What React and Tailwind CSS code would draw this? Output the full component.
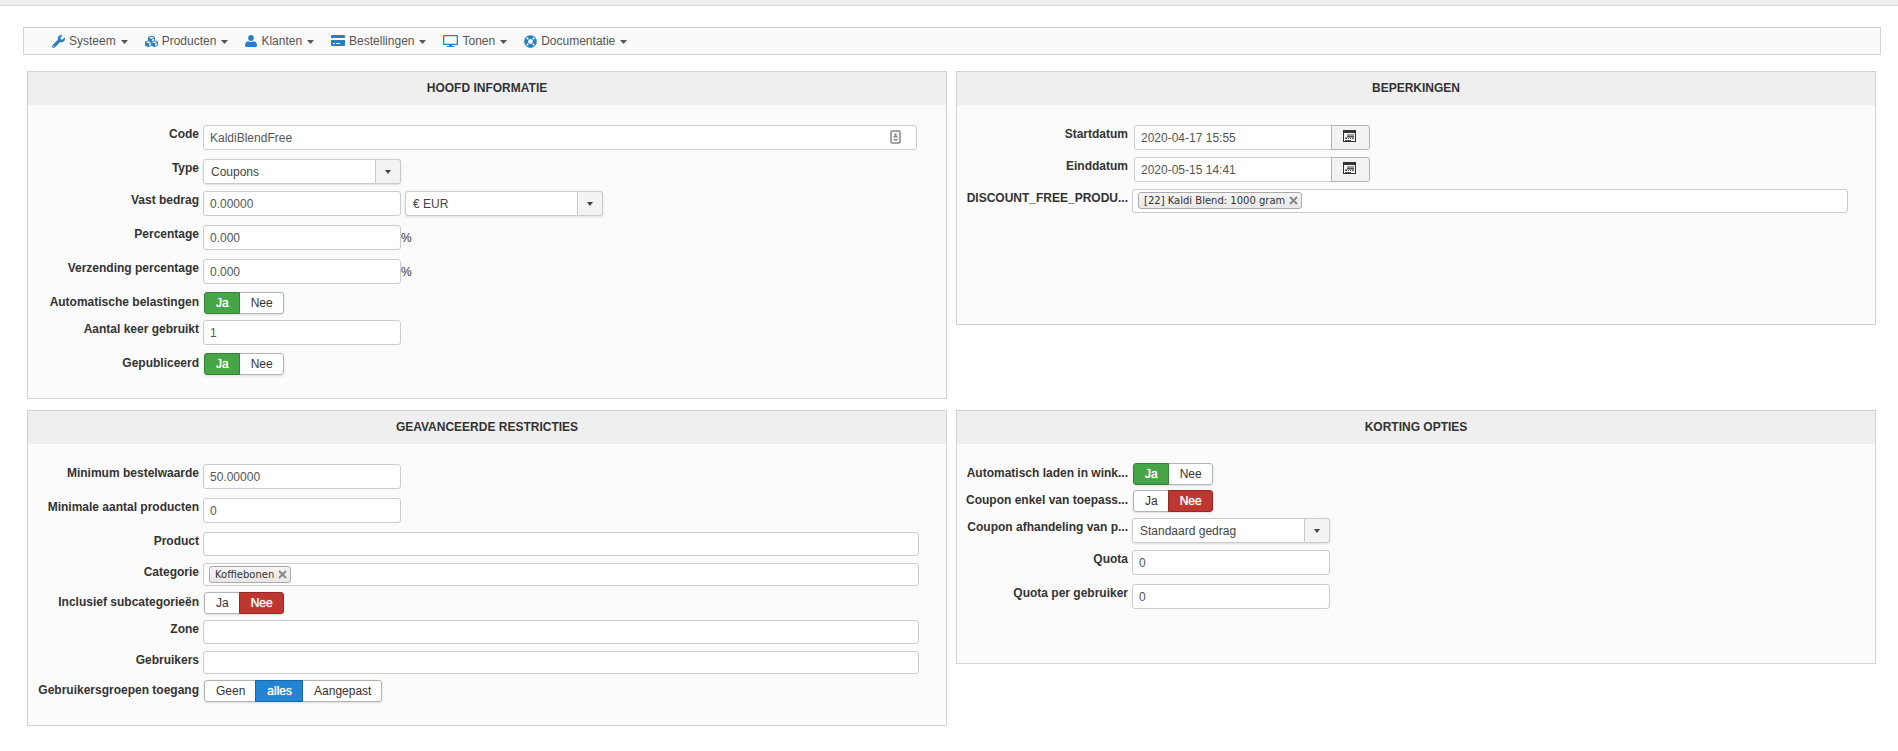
import React, { useState } from 'react';
import { FaWrench, FaCubes, FaLifeRing } from 'react-icons/fa';

const LABEL = 'w-[162px] mr-1 shrink-0 whitespace-nowrap text-right font-bold leading-5';
const INPUT = 'mt-px h-[25px] rounded-[3px] border border-[#ccc] bg-white px-1.5 text-[#555] outline-none';

function Caret({ className = 'h-1 w-[7px]' }) {
  return (
    <svg viewBox="0 0 8 4" className={className} preserveAspectRatio="none" fill="currentColor" aria-hidden="true">
      <path d="M0 0h8L4 4z" />
    </svg>
  );
}

function UserIcon() {
  return (
    <svg viewBox="0 0 12 12" className="h-3 w-3" fill="currentColor" aria-hidden="true">
      <ellipse cx="6" cy="3" rx="2.800" ry="3" />
      <path d="M3 6.300Q4.300 7 6 7T9 6.300Q12 7 12 10.500 12 12 10.500 12h-9Q0 12 0 10.500 0 7 3 6.300z" />
    </svg>
  );
}

function CardIcon() {
  return (
    <svg viewBox="0 0 14 12" className="h-3 w-3.5" fill="currentColor" aria-hidden="true">
      <path d="M1 0h12q1 0 1 1v2H0V1q0-1 1-1z" />
      <path fillRule="evenodd" d="M0 5h14v5q0 1-1 1H1q-1 0-1-1zm2 3v1h2V8zm3 0v1h4V8z" />
    </svg>
  );
}

function ScreenIcon() {
  return (
    <svg viewBox="0 0 15 12" className="h-3 w-[15px]" fill="currentColor" aria-hidden="true">
      <path fillRule="evenodd" d="M1 0h13q1 0 1 1v8q0 1-1 1H1q-1 0-1-1V1q0-1 1-1zm.300 1.300v7.400h12.400V1.300z" />
      <path d="M6 10h3v1h2v1H4v-1h2z" />
    </svg>
  );
}

function CalendarIcon() {
  return (
    <svg viewBox="0 0 13 12" className="h-3 w-[13px]" aria-hidden="true" fill="#333">
      <path fillRule="evenodd" d="M0 0h13v12H0zm1 3v8h11V3z" />
      <path fill="#999" d="M4 4h7v3H4zM2 7h9v1H2z" />
      <path fill="#555" d="M4 6h7v1H4zM2 8h2v1H2zM5 8h1v1H5zM7 8h1v1H7zM9 8h2v1H9zM2 10h6v1H2z" />
    </svg>
  );
}

// Small contact card at the end of the code field
function ContactIcon({ className }) {
  return (
    <svg viewBox="0 0 11 14" className={`h-3.5 w-[11px] ${className}`} aria-hidden="true">
      <rect x="1" y="1" width="9" height="12" rx="1" fill="#f6f6f6" stroke="#888" strokeWidth="1.500" />
      <path d="M4.500 3.500h2v3h-2zM3.500 6h4v1.500h-4zM3.500 9h4v1.500h-4z" fill="#888" />
    </svg>
  );
}

const MENU = [
  { label: 'Systeem', icon: <FaWrench size={13} /> },
  { label: 'Producten', icon: <FaCubes size={13} /> },
  { label: 'Klanten', icon: <UserIcon /> },
  { label: 'Bestellingen', icon: <CardIcon /> },
  { label: 'Tonen', icon: <ScreenIcon /> },
  { label: 'Documentatie', icon: <FaLifeRing size={13} /> },
];

function Panel({ title, children }) {
  return (
    <section className="min-h-[254px] border border-[#d3d3d3] bg-[#fbfbfb] pb-[18px]">
      <h2 className="mb-[19px] h-[33px] bg-[#efefef] text-center leading-[33px] font-bold uppercase">{title}</h2>
      <div className="pr-[27px] pl-[9px]">{children}</div>
    </section>
  );
}

function Row({ label, id, height = 'h-[34px]', children }) {
  return (
    <div className={`flex items-start ${height}`}>
      <label htmlFor={id} className={LABEL}>{label}</label>
      {children}
    </div>
  );
}

function TextRow({ label, id, value, suffix, children }) {
  return (
    <Row label={label} id={id}>
      <input id={id} type="text" defaultValue={value} className={`${INPUT} w-[198px]`} />
      {suffix && <span className="leading-7">{suffix}</span>}
      {children}
    </Row>
  );
}

function Select({ id, options, label }) {
  return (
    <div className="relative mt-px h-[25px] w-[198px]">
      <select
        id={id}
        aria-label={label}
        className="h-full w-full appearance-none rounded-[3px] border border-[#ccc] bg-white pl-[7px] text-[#444] shadow-sm outline-none"
      >
        {options.map((o) => (
          <option key={o}>{o}</option>
        ))}
      </select>
      <span className="pointer-events-none absolute inset-y-0 right-0 flex w-[26px] items-center justify-center rounded-r-[3px] border border-[#ccc] bg-[#f3f3f3] text-[#444]">
        <Caret className="h-1 w-1.5" />
      </span>
    </div>
  );
}

const ACTIVE = {
  green: 'z-10 border-[#378137] bg-[#46a546] text-white [text-shadow:0_0_1px_#fff]',
  red: 'z-10 border-[#942a25] bg-[#bd362f] text-white [text-shadow:0_0_1px_#fff]',
  blue: 'z-10 border-[#1a67a5] bg-[#2384d3] text-white [text-shadow:0_0_1px_#fff]',
};

function ToggleRow({ label, name, options, initial }) {
  const [value, setValue] = useState(initial);
  return (
    <div role="radiogroup" aria-label={label} className="flex h-[27px] items-start">
      <span className={LABEL}>{label}</span>
      <div className="ml-px flex rounded-[3px] shadow-sm">
        {options.map(([text, color]) => (
          <label
            key={text}
            className={`relative -ml-px h-[22px] cursor-pointer border pr-2.5 pl-[11px] leading-5 first:ml-0 first:rounded-l-[3px] last:rounded-r-[3px] ${
              value === text ? ACTIVE[color] : 'border-[#b3b3b3] bg-white'
            }`}
          >
            <input
              type="radio"
              name={name}
              className="sr-only"
              checked={value === text}
              onChange={() => setValue(text)}
            />
            {text}
          </label>
        ))}
      </div>
    </div>
  );
}

const YES_NO = [['Ja', 'green'], ['Nee', 'red']];
const GROUPS = [['Geen', 'red'], ['alles', 'blue'], ['Aangepast', 'green']];

// Multi-select box with removable tags
function TagRow({ label, id, height, boxHeight = 'h-6', initial = [] }) {
  const [tags, setTags] = useState(initial);
  return (
    <Row label={label} id={id} height={height}>
      <div className={`mt-px flex flex-1 items-start rounded-[3px] border border-[#ccc] bg-white px-[5px] pt-0.5 ${boxHeight}`}>
        {tags.map((tag) => (
          <span
            key={tag}
            className="flex h-[17px] shrink-0 items-center gap-1 rounded-[3px] border border-[#aaa] bg-linear-to-b from-[#f4f4f4] to-[#e8e8e8] pr-[3px] pl-[5px] font-['DejaVu_Sans'] text-[10px] leading-[15px] text-[#333]"
          >
            {tag}
            <button
              type="button"
              aria-label={`Verwijder ${tag}`}
              onClick={() => setTags(tags.filter((t) => t !== tag))}
            >
              <svg viewBox="0 0 9 9" className="h-[9px] w-[9px]" stroke="#888" strokeWidth="2" aria-hidden="true">
                <path d="M1 1l7 7M8 1L1 8" />
              </svg>
            </button>
          </span>
        ))}
        <input id={id} type="text" className="h-full min-w-0 flex-1 bg-transparent outline-none" />
      </div>
    </Row>
  );
}

function DateRow({ label, id, value }) {
  return (
    <Row label={label} id={id} height="h-8">
      <input id={id} type="text" defaultValue={value} className={`${INPUT} ml-0.5 w-[198px] rounded-r-none`} />
      <button
        type="button"
        aria-label={`${label} kiezen`}
        className="mt-px -ml-px flex h-[25px] w-[39px] justify-center rounded-r-[3px] border border-[#b3b3b3] bg-[#f3f3f3] pt-1 pr-0.5"
      >
        <CalendarIcon />
      </button>
    </Row>
  );
}

function App() {
  return (
    <div className="bg-white font-['Liberation_Sans',Arial,sans-serif] text-xs text-[#333]">
      <div className="h-1.5 border-b border-[#ddd] bg-[#efefef]" />
      <nav className="mt-[21px] mr-[17px] ml-[23px] flex h-7 items-center gap-[17px] border border-[#d3d3d3] bg-[#fafafa] pl-7 text-[#555]">
        {MENU.map((item) => (
          <a key={item.label} href="#" className="flex items-center gap-1">
            <span className="text-[#2a7fc0]">{item.icon}</span>
            {item.label}
            <Caret className="mt-0.5 ml-px h-1 w-[7px]" />
          </a>
        ))}
      </nav>

      <main className="mt-4 mr-[22px] ml-[27px] grid grid-cols-2 items-start gap-x-[9px] gap-y-[11px]">
        <Panel title="Hoofd informatie">
          <Row label="Code" id="code">
            <div className="relative mr-0.5 flex flex-1">
              <input id="code" type="text" defaultValue="KaldiBlendFree" className={`${INPUT} w-full`} />
              <ContactIcon className="absolute top-1.5 right-4" />
            </div>
          </Row>
          <Row label="Type" id="type" height="h-8">
            <Select id="type" options={['Coupons', 'Kortingen']} />
          </Row>
          <TextRow label="Vast bedrag" id="flat" value="0.00000">
            <div className="ml-1">
              <Select id="currency" label="Valuta" options={['€ EUR']} />
            </div>
          </TextRow>
          <TextRow label="Percentage" id="percent" value="0.000" suffix="%" />
          <TextRow label="Verzending percentage" id="shipping" value="0.000" suffix="%" />
          <ToggleRow label="Automatische belastingen" name="tax" options={YES_NO} initial="Ja" />
          <TextRow label="Aantal keer gebruikt" id="used" value="1" />
          <ToggleRow label="Gepubliceerd" name="published" options={YES_NO} initial="Ja" />
        </Panel>

        <Panel title="Beperkingen">
          <DateRow label="Startdatum" id="start" value="2020-04-17 15:55" />
          <DateRow label="Einddatum" id="end" value="2020-05-15 14:41" />
          <TagRow
            label="DISCOUNT_FREE_PRODU..."
            id="free"
            height="h-[31px]"
            initial={['[22] Kaldi Blend: 1000 gram']}
          />
        </Panel>

        <Panel title="Geavanceerde restricties">
          <TextRow label="Minimum bestelwaarde" id="minorder" value="50.00000" />
          <TextRow label="Minimale aantal producten" id="minqty" value="0" />
          <TagRow label="Product" id="product" height="h-[31px]" />
          <TagRow label="Categorie" id="category" height="h-[30px]" boxHeight="h-[23px]" initial={['Koffiebonen']} />
          <ToggleRow label="Inclusief subcategorieën" name="subcats" options={YES_NO} initial="Nee" />
          <TagRow label="Zone" id="zone" height="h-[31px]" />
          <TagRow label="Gebruikers" id="users" height="h-[30px]" boxHeight="h-[23px]" />
          <ToggleRow label="Gebruikersgroepen toegang" name="groups" options={GROUPS} initial="alles" />
        </Panel>

        <Panel title="Korting opties">
          <ToggleRow label="Automatisch laden in wink..." name="autoload" options={YES_NO} initial="Ja" />
          <ToggleRow label="Coupon enkel van toepass..." name="only" options={YES_NO} initial="Nee" />
          <Row label="Coupon afhandeling van p..." id="handling" height="h-8">
            <Select id="handling" options={['Standaard gedrag']} />
          </Row>
          <TextRow label="Quota" id="quota" value="0" />
          <TextRow label="Quota per gebruiker" id="quotauser" value="0" />
        </Panel>
      </main>
    </div>
  );
}

export default App;
